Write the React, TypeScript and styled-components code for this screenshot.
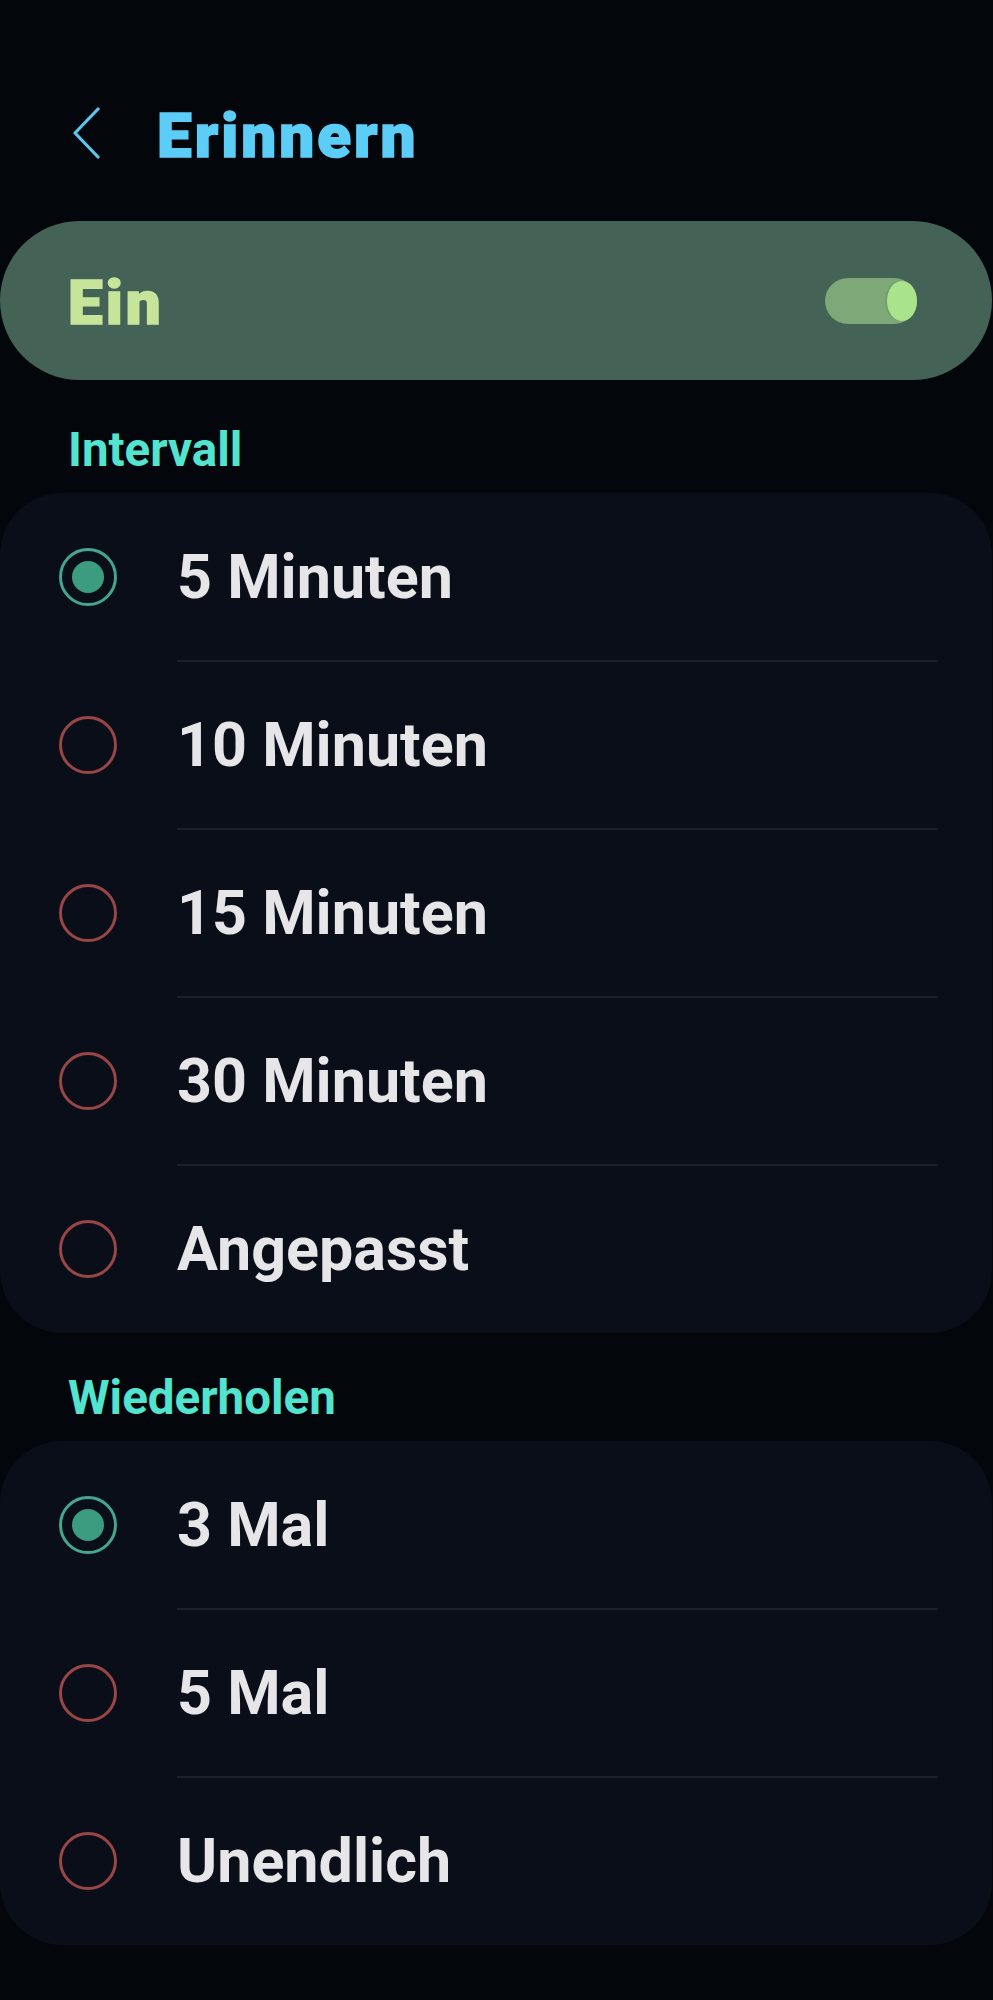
import * as React from "react";
import styled, { createGlobalStyle } from "styled-components";

const GlobalStyle = createGlobalStyle`
    html, body {
        margin: 0;
        padding: 0;
        background: #03070c;
    }
    body {
        font-family: Roboto, "Noto Sans", "Liberation Sans", sans-serif;
        -webkit-font-smoothing: antialiased;
    }
`;

const Page = styled.div`
    width: 993px;
    min-height: 2000px;
    background: #03070c;
    display: flex;
    flex-direction: column;
    padding: 86px 1px 40px 0;
    box-sizing: border-box;
`;

const Header = styled.div`
    height: 100px;
    display: flex;
    align-items: center;
    padding-left: 72px;
    gap: 57px;
`;

const BackButton = styled.div`
    width: 28px;
    height: 52px;
    display: flex;
    align-items: center;
    justify-content: center;
    margin-top: -6px;
`;

const Title = styled.h1`
    margin: 0;
    font-size: 62px;
    font-weight: 900;
    line-height: 1;
    color: #5ccdf6;
    letter-spacing: 3px;
    -webkit-text-stroke: 1.6px #5ccdf6;
`;

const MasterSwitch = styled.div`
    margin-top: 35px;
    height: 159px;
    border-radius: 80px;
    background: #456257;
    display: flex;
    align-items: center;
    justify-content: space-between;
    padding: 0 75px 0 68px;
    box-sizing: border-box;
`;

const MasterLabel = styled.span`
    font-size: 62px;
    font-weight: 900;
    color: #c6e59b;
    letter-spacing: 3px;
    -webkit-text-stroke: 1.6px #c6e59b;
    line-height: 1;
    margin-top: 4px;
`;

const Track = styled.div<{ $on: boolean }>`
    width: 92px;
    height: 46px;
    border-radius: 23px;
    background: ${p => (p.$on ? "#7fa878" : "#5a6660")};
    display: flex;
    align-items: center;
    justify-content: ${p => (p.$on ? "flex-end" : "flex-start")};
`;

const Thumb = styled.div`
    width: 30px;
    height: 40px;
    border-radius: 50%;
    background: #a9e48c;
    box-shadow: -2px 0 0 #739f6b;
`;

const SectionLabel = styled.div<{ $gap: number }>`
    margin: ${p => p.$gap}px 0 20px 68px;
    height: 46px;
    font-size: 47.5px;
    line-height: 46px;
    font-weight: 700;
    color: #52e4cf;
`;

const Card = styled.div`
    background: #090e19;
    border-radius: 62px;
    display: flex;
    flex-direction: column;
`;

const Row = styled.div`
    height: 168px;
    display: flex;
    align-items: center;
    padding-left: 59px;
    box-sizing: border-box;
`;

const Divider = styled.div`
    height: 2px;
    margin: -1px 54px -1px 177px;
    background: #19212d;
    position: relative;
    z-index: 1;
`;

const Radio = styled.div<{ $checked: boolean }>`
    width: 58px;
    height: 58px;
    border-radius: 50%;
    box-sizing: border-box;
    border: 3px solid ${p => (p.$checked ? "#45a58d" : "#9a4646")};
    display: flex;
    align-items: center;
    justify-content: center;
    flex-shrink: 0;

    &::after {
        content: "";
        display: ${p => (p.$checked ? "block" : "none")};
        width: 32px;
        height: 32px;
        border-radius: 50%;
        background: #3b9c80;
    }
`;

const RowLabel = styled.span`
    margin-left: 60px;
    font-size: 61px;
    font-weight: 700;
    color: #e6e6e9;
    line-height: 1;
`;

type OptionGroupProps = {
    options: string[];
    selected: number;
};

const OptionGroup: React.FC<OptionGroupProps> = ({ options, selected }) => (
    <Card>
        {options.map((label, i) => (
            <React.Fragment key={label}>
                {i > 0 && <Divider />}
                <Row>
                    <Radio $checked={i === selected} />
                    <RowLabel>{label}</RowLabel>
                </Row>
            </React.Fragment>
        ))}
    </Card>
);

const intervals = ["5 Minuten", "10 Minuten", "15 Minuten", "30 Minuten", "Angepasst"];
const repeats = ["3 Mal", "5 Mal", "Unendlich"];

export default function App() {
    return <>
        <GlobalStyle />
        <Page>
            <Header>
                <BackButton>
                    <svg width="28" height="52" viewBox="0 0 28 52">
                        <polyline
                            points="26,2 3,26 26,50"
                            fill="none"
                            stroke="#5bc6ee"
                            strokeWidth="3.2"
                            strokeLinecap="round"
                            strokeLinejoin="round"
                        />
                    </svg>
                </BackButton>
                <Title>Erinnern</Title>
            </Header>
            <MasterSwitch>
                <MasterLabel>Ein</MasterLabel>
                <Track $on>
                    <Thumb />
                </Track>
            </MasterSwitch>
            <SectionLabel $gap={47}>Intervall</SectionLabel>
            <OptionGroup options={intervals} selected={0} />
            <SectionLabel $gap={42}>Wiederholen</SectionLabel>
            <OptionGroup options={repeats} selected={0} />
        </Page>
    </>;
}
